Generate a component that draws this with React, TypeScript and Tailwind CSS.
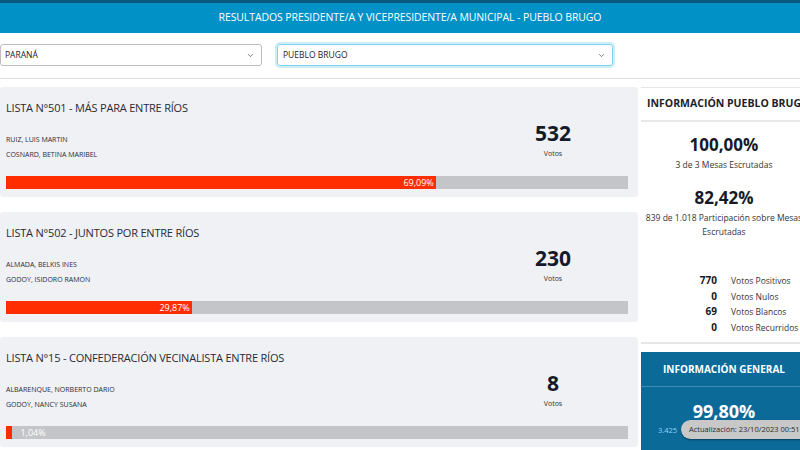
import { ChevronDown } from 'lucide-react';

interface Lista {
  title: string;
  names: string[];
  votes: string;
  pct: number;
  label: string;
}

const listas: Lista[] = [
  {
    title: 'LISTA N°501 - MÁS PARA ENTRE RÍOS',
    names: ['RUIZ, LUIS MARTIN', 'COSNARD, BETINA MARIBEL'],
    votes: '532',
    pct: 69.09,
    label: '69,09%'
  },
  {
    title: 'LISTA N°502 - JUNTOS POR ENTRE RÍOS',
    names: ['ALMADA, BELKIS INES', 'GODOY, ISIDORO RAMON'],
    votes: '230',
    pct: 29.87,
    label: '29,87%'
  },
  {
    title: 'LISTA N°15 - CONFEDERACIÓN VECINALISTA ENTRE RÍOS',
    names: ['ALBARENQUE, NORBERTO DARIO', 'GODOY, NANCY SUSANA'],
    votes: '8',
    pct: 1.04,
    label: '1,04%'
  }
];

const votos = [
  { n: '770', label: 'Votos Positivos' },
  { n: '0', label: 'Votos Nulos' },
  { n: '69', label: 'Votos Blancos' },
  { n: '0', label: 'Votos Recurridos' }
];

function ListaCard({ lista }: { lista: Lista }) {
  const small = lista.pct < 10;
  return (
    <div className="h-[110px] bg-[#f0f1f4] rounded-[3px] pl-[6px] pr-[10px] flex flex-col">
      <div className="flex justify-between">
        <div>
          <div className="pt-[13px] text-[11px] leading-[16px] tracking-[-0.2px] text-[#2a2a35] whitespace-nowrap">{lista.title}</div>
          <div className="mt-[16px] text-[7px] leading-[15px] text-[#2a2a35]">
            {lista.names.map((n) => (
              <div key={n}>{n}</div>
            ))}
          </div>
        </div>
        <div className="w-[80px] mr-[35px] pt-[34px] flex flex-col items-center">
          <div className="text-[21px] leading-[24px] font-bold text-[#141a2b]">{lista.votes}</div>
          <div className="mt-[4px] text-[7px] leading-[10px] text-[#333]">Votos</div>
        </div>
      </div>
      <div className="mt-[14px] h-[13px] bg-[#c4c5c8] flex items-center">
        <div
          className="h-full bg-[#ff2d00] flex items-center justify-end pr-[2px] text-[9px] leading-none text-white"
          style={{ width: `${lista.pct}%` }}
        >
          {!small && lista.label}
        </div>
        {small && <span className="ml-[8px] text-[9px] leading-none text-white">{lista.label}</span>}
      </div>
    </div>
  );
}

export default function App() {
  return (
    <div className="w-[800px] h-[450px] overflow-hidden bg-white font-['Open_Sans',sans-serif] text-[#222]">
      <div className="h-[3px] bg-[#0b5b80]" />
      <div className="h-[30px] bg-[#0191c7] flex items-center justify-center pl-[20px] text-[10.5px] text-white tracking-[-0.1px]">
        RESULTADOS PRESIDENTE/A Y VICEPRESIDENTE/A MUNICIPAL - PUEBLO BRUGO
      </div>

      <div className="h-[46px] pt-[11px] border-b border-[#dedede] flex">
        <div className="w-[262px] h-[22px] border border-[#bdbdbd] rounded-[3px] flex items-center justify-between pl-[4px] pr-[6px] text-[8.5px] text-[#222]">
          <span>PARANÁ</span>
          <ChevronDown size={9} strokeWidth={2} className="text-[#555]" />
        </div>
        <div className="ml-[15px] w-[336px] h-[22px] border border-[#7fd3ee] rounded-[3px] shadow-[0_0_0_2px_#cdeef9] flex items-center justify-between pl-[5px] pr-[6px] text-[8.5px] text-[#222]">
          <span>PUEBLO BRUGO</span>
          <ChevronDown size={9} strokeWidth={2} className="text-[#555]" />
        </div>
      </div>

      <div className="flex">
        <div className="w-[638px] shrink-0 pt-[8px] flex flex-col gap-[15px]">
          {listas.map((l) => (
            <ListaCard key={l.title} lista={l} />
          ))}
        </div>

        <div className="ml-[3px] w-[166px] shrink-0 pt-[8px]">
          <div className="border-t border-[#e6e6e6]">
            <div className="h-[34px] border-b-2 border-[#e8e8e8] flex items-center pl-[6px] text-[10.5px] font-bold text-[#1e1e28] whitespace-nowrap">
              INFORMACIÓN PUEBLO BRUGO
            </div>
            <div className="flex flex-col items-center text-center">
              <div className="mt-[12px] text-[17px] leading-[22px] font-bold text-[#161a28]">100,00%</div>
              <div className="mt-[3px] text-[8.5px] leading-[12px] text-[#333]">3 de 3 Mesas Escrutadas</div>
              <div className="mt-[16px] text-[17px] leading-[22px] font-bold text-[#161a28]">82,42%</div>
              <div className="mt-[2px] w-[162px] text-[8.5px] leading-[14px] text-[#333]">
                839 de 1.018 Participación sobre Mesas Escrutadas
              </div>
            </div>
            <div className="mt-[34px] flex flex-col leading-[15.5px]">
              {votos.map((v) => (
                <div key={v.label} className="flex items-baseline">
                  <span className="w-[76px] text-right text-[10px] font-bold text-[#161a28]">{v.n}</span>
                  <span className="ml-[14px] text-[8.5px] text-[#333] whitespace-nowrap">{v.label}</span>
                </div>
              ))}
            </div>
            <div className="mt-[7px] h-[2px] bg-[#e6e6e6]" />
          </div>

          <div className="mt-[8px] h-[100px] bg-[#0c6a99] text-white">
            <div className="h-[35px] border-b border-[#3f8db5] flex items-center justify-center text-[10px] font-bold whitespace-nowrap">
              INFORMACIÓN GENERAL
            </div>
            <div className="flex flex-col items-center">
              <div className="mt-[13px] text-[18px] leading-[22px] font-bold">99,80%</div>
            </div>
            <div className="relative mt-[1px] h-[16px]">
              <span className="absolute left-[17px] top-[2px] text-[7.5px] text-[#8fd3f2]">3.425</span>
              <div className="absolute left-[40px] top-[-3px] h-[19px] w-[150px] rounded-full bg-[#c8c8c8] shadow-[0_1px_2px_rgba(0,0,0,0.4)] flex items-center pl-[8px] text-[7.5px] text-[#2a2a2a] whitespace-nowrap">
                Actualización: 23/10/2023 00:51
              </div>
            </div>
          </div>
        </div>
      </div>
    </div>
  );
}
